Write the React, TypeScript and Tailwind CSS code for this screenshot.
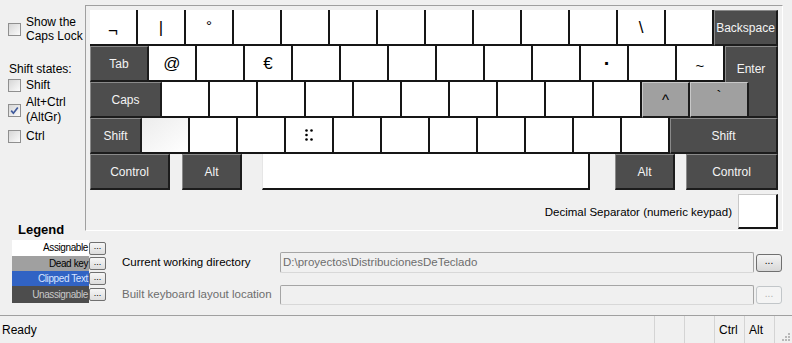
import React from 'react';

type KeyDef = { w: string; kind?: 'w' | 'd' | 'x' | 'g'; label?: React.ReactNode };

const kindClass: Record<string, string> = {
  w: 'bg-white border-r-2 border-b-2 border-[#161616] text-black text-[17px]',
  g: 'bg-gradient-to-br from-[#ececec] to-white border-r-2 border-b-2 border-[#161616]',
  d: 'bg-[#4d4d4d] text-[#f4f4f4] text-[12px] border-t border-l border-t-[#8a8a8a] border-l-[#8a8a8a] border-r-2 border-b-2 border-r-[#1c1c1c] border-b-[#1c1c1c]',
  x: 'bg-[#a0a0a0] text-black text-[15px] border-t border-l border-t-[#c8c8c8] border-l-[#c8c8c8] border-r-2 border-b-2 border-r-[#1c1c1c] border-b-[#1c1c1c]',
};

const K48 = 'w-[48px]';
const blank = (n: number): KeyDef[] => Array.from({ length: n }, () => ({ w: K48, kind: 'w' as const }));

function Dots() {
  return (
    <svg width="9" height="12" viewBox="0 0 9 12">
      <circle cx="1.5" cy="1.5" r="1.3" fill="#000" />
      <circle cx="6.5" cy="1.5" r="1.3" fill="#000" />
      <circle cx="1.5" cy="6" r="1.3" fill="#000" />
      <circle cx="1.5" cy="10.5" r="1.3" fill="#000" />
      <circle cx="6.5" cy="10.5" r="1.3" fill="#000" />
    </svg>
  );
}

const row1: KeyDef[] = [
  { w: K48, kind: 'w', label: <span className="mt-[6px]">¬</span> },
  { w: K48, kind: 'w', label: <span className="text-black">|</span> },
  { w: K48, kind: 'w', label: <span className="text-[15px] -mt-[4px]">°</span> },
  ...blank(8),
  { w: K48, kind: 'w', label: '\\' },
  { w: K48, kind: 'w' },
  { w: 'w-[64px]', kind: 'd', label: 'Backspace' },
];

const row2: KeyDef[] = [
  { w: 'w-[59px]', kind: 'd', label: 'Tab' },
  { w: K48, kind: 'w', label: '@' },
  { w: K48, kind: 'w' },
  { w: K48, kind: 'w', label: '€' },
  ...blank(6),
  { w: K48, kind: 'w', label: <span className="ml-[6px] font-bold text-[20px]">·</span> },
  { w: K48, kind: 'w' },
  { w: K48, kind: 'w', label: <span className="mt-[4px] text-[15px]">~</span> },
];

const row3: KeyDef[] = [
  { w: 'w-[72px]', kind: 'd', label: 'Caps' },
  ...blank(10),
  { w: K48, kind: 'x', label: '^' },
  { w: 'w-[59px]', kind: 'x', label: <span className="-mt-[8px]">`</span> },
];

const row4: KeyDef[] = [
  { w: 'w-[52px]', kind: 'd', label: 'Shift' },
  { w: K48, kind: 'g' },
  ...blank(2),
  { w: K48, kind: 'w', label: <Dots /> },
  ...blank(7),
  { w: 'w-[108px]', kind: 'd', label: 'Shift' },
];

function Key({ k }: { k: KeyDef }) {
  return (
    <div className={`${k.w} ${kindClass[k.kind ?? 'w']} flex h-full shrink-0 items-center justify-center leading-none`}>
      {k.label}
    </div>
  );
}

function Check({ checked }: { checked?: boolean }) {
  return (
    <span className="relative inline-block h-[13px] w-[13px] shrink-0 border border-[#8f8f8f] bg-gradient-to-br from-[#d6d6d6] to-[#fbfbfb]">
      {checked && (
        <svg viewBox="0 0 11 11" className="absolute inset-0 h-full w-full">
          <path d="M2.2 5.6 L4.4 8.2 L8.8 2.4" fill="none" stroke="#3f5a9c" strokeWidth="1.7" />
        </svg>
      )}
    </span>
  );
}

function SmallBtn() {
  return (
    <div className="flex h-[13px] w-[17px] items-center justify-center rounded-[2px] border border-[#707070] bg-gradient-to-b from-[#f6f6f6] to-[#dddddd] text-[9px] leading-none text-black">
      <span className="-mt-[3px]">...</span>
    </div>
  );
}

function BrowseBtn({ disabled }: { disabled?: boolean }) {
  return (
    <div
      className={`flex h-[18px] w-[26px] items-center justify-center rounded-[3px] border text-[10px] leading-none ${
        disabled ? 'border-[#c2c6c9] bg-[#f4f4f4] text-[#b0b0b0]' : 'border-[#707070] bg-gradient-to-b from-[#f4f4f4] to-[#d8d8d8] text-black'
      }`}
    >
      <span className="-mt-[3px]">...</span>
    </div>
  );
}

const legend = [
  { label: 'Assignable', cls: 'bg-white text-black h-[16px]' },
  { label: 'Dead key', cls: 'bg-[#a0a0a0] text-black h-[15px]' },
  { label: 'Clipped Text', cls: 'bg-[#3163c4] text-[#d8e4ff] h-[15px]' },
  { label: 'Unassignable', cls: 'bg-[#4d4d4d] text-[#c8c8c8] h-[17px]' },
];

export default function App() {
  return (
    <div className="flex h-[343px] w-[792px] flex-col overflow-hidden bg-[#f0f0f0] font-['Liberation_Sans',Arial,sans-serif] text-[11.5px] text-black">
      {/* top: options + keyboard */}
      <div className="flex h-[238px] shrink-0">
        <div className="flex w-[85px] shrink-0 flex-col pl-[8px] text-[12px]">
          <div className="mt-[15px] flex items-center gap-[5px]">
            <Check />
            <div className="leading-[14px]">
              Show the
              <br />
              Caps Lock
            </div>
          </div>
          <div className="mt-[19px] pl-[1px] leading-[14px]">Shift states:</div>
          <div className="mt-[2px] flex items-center gap-[5px] leading-[14px]">
            <Check />
            Shift
          </div>
          <div className="mt-[3px] flex items-center gap-[5px]">
            <Check checked />
            <div className="leading-[15px]">
              Alt+Ctrl
              <br />
              (AltGr)
            </div>
          </div>
          <div className="mt-[4px] flex items-center gap-[5px] leading-[14px]">
            <Check />
            Ctrl
          </div>
          <div className="mt-auto mb-[1px] pl-[10px] text-[13px] font-bold leading-[14px]">Legend</div>
        </div>

        <div className="mt-[5px] h-[226px] w-[698px] shrink-0 border-t border-l border-b border-r border-t-[#a0a0a0] border-l-[#a0a0a0] border-b-white border-r-white pl-[4px] pt-[4px]">
          <div className="flex h-[36px]">
            {row1.map((k, i) => (
              <Key key={i} k={k} />
            ))}
          </div>
          <div className="flex h-[36px]">
            {row2.map((k, i) => (
              <Key key={i} k={k} />
            ))}
            <div className="flex h-full w-[53px] shrink-0 items-center justify-center border-t border-l border-r-2 border-t-[#8a8a8a] border-l-[#8a8a8a] border-r-[#1c1c1c] bg-[#4d4d4d] pt-[8px] text-[12px] text-[#f4f4f4]">
              Enter
            </div>
          </div>
          <div className="flex h-[36px]">
            {row3.map((k, i) => (
              <Key key={i} k={k} />
            ))}
            <div className="h-full w-[29px] shrink-0 border-r-2 border-b-2 border-[#1c1c1c] bg-[#4d4d4d]" />
          </div>
          <div className="flex h-[36px]">
            {row4.map((k, i) => (
              <Key key={i} k={k} />
            ))}
          </div>
          <div className="flex h-[36px]">
            <Key k={{ w: 'w-[80px]', kind: 'd', label: 'Control' }} />
            <div className="w-[12px] shrink-0" />
            <Key k={{ w: 'w-[60px]', kind: 'd', label: 'Alt' }} />
            <div className="w-[20px] shrink-0" />
            <div className="h-full w-[328px] shrink-0 border-l border-l-[#e6e6e6] border-r-2 border-b-2 border-r-[#161616] border-b-[#161616] bg-white" />
            <div className="w-[25px] shrink-0" />
            <Key k={{ w: 'w-[60px]', kind: 'd', label: 'Alt' }} />
            <div className="w-[11px] shrink-0" />
            <Key k={{ w: 'w-[92px]', kind: 'd', label: 'Control' }} />
          </div>
          <div className="mt-[4px] flex h-[35px] w-[688px] items-center justify-end">
            <span className="mt-[2px]">Decimal Separator (numeric keypad)</span>
            <div className="ml-[6px] h-full w-[40px] border-t border-l border-r-2 border-b-2 border-t-[#c8c8c8] border-l-[#c8c8c8] border-r-[#161616] border-b-[#161616] bg-white" />
          </div>
        </div>
      </div>

      {/* bottom: legend + paths */}
      <div className="flex h-[77px] shrink-0">
        <div className="flex w-[110px] shrink-0 flex-col pl-[12px] pt-[2px]">
          {legend.map((l) => (
            <div key={l.label} className="flex items-center">
              <div className={`${l.cls} flex w-[77px] items-center justify-end pr-[1px] text-[10px] leading-none tracking-[-0.4px]`}>
                {l.label}
              </div>
              <SmallBtn />
            </div>
          ))}
        </div>
        <div className="flex flex-1 flex-col gap-[12px] pl-[12px] pr-[10px] pt-[14px]">
          <div className="flex h-[21px] items-center">
            <div className="w-[158px] shrink-0">Current working directory</div>
            <div className="flex h-full flex-1 items-center rounded-[2px] border border-[#a5a5a5] border-b-[#d8d8d8] bg-[#f0f0f0] pl-[2px] text-[#6d6d6d]">
              D:\proyectos\DistribucionesDeTeclado
            </div>
            <div className="ml-[2px]">
              <BrowseBtn />
            </div>
          </div>
          <div className="flex h-[20px] items-center">
            <div className="w-[158px] shrink-0 text-[#6d6d6d]">Built keyboard layout location</div>
            <div className="h-full flex-1 rounded-[2px] border border-[#a5a5a5] border-b-[#d8d8d8] bg-[#f0f0f0]" />
            <div className="ml-[2px]">
              <BrowseBtn disabled />
            </div>
          </div>
        </div>
      </div>

      {/* status bar */}
      <div className="flex flex-1 border-t border-t-[#a0a0a0] text-[12px]">
        <div className="flex flex-1 items-center pl-[2px]">Ready</div>
        <div className="w-[30px] border-l border-l-[#d4d4d4]" />
        <div className="w-[30px] border-l border-l-[#d4d4d4]" />
        <div className="flex w-[30px] items-center border-l border-l-[#d4d4d4] pl-[4px]">Ctrl</div>
        <div className="flex w-[30px] items-center border-l border-l-[#d4d4d4] pl-[4px]">Alt</div>
        <div className="relative w-[18px] border-l border-l-[#d4d4d4]">
          <svg width="11" height="11" viewBox="0 0 11 11" className="absolute right-[1px] bottom-[1px]">
            <rect x="8" y="8" width="2" height="2" fill="#b8b8b8" />
            <rect x="5" y="8" width="2" height="2" fill="#b8b8b8" />
            <rect x="8" y="5" width="2" height="2" fill="#b8b8b8" />
            <rect x="2" y="8" width="2" height="2" fill="#b8b8b8" />
            <rect x="5" y="5" width="2" height="2" fill="#b8b8b8" />
            <rect x="8" y="2" width="2" height="2" fill="#b8b8b8" />
          </svg>
        </div>
      </div>
    </div>
  );
}
